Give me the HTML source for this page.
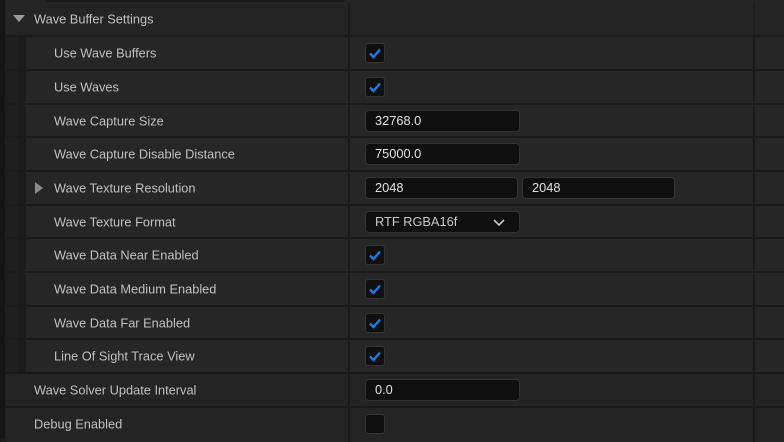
<!DOCTYPE html>
<html><head><style>
body{margin:0;width:784px;height:438px;background:#1e1e1e;overflow:hidden;font-family:"Liberation Sans",sans-serif;font-size:12.8px;color:#c0c0c0;position:relative}
.r{position:absolute;left:6px;width:778px;background:#242424;border-bottom:2px solid #1a1a1a;box-sizing:border-box}
.n{background:#1f1f1f}
.n .in{position:absolute;left:12px;top:0;bottom:0;width:8px;background:#1b1b1b}
.n .bg{position:absolute;left:20px;top:0;bottom:0;right:0;background:#262626}
.lbl{position:absolute;top:50%;transform:translateY(-50%);white-space:nowrap}
.d1{position:absolute;left:342px;top:0;bottom:0;width:2px;background:#1a1a1a}
.d2{position:absolute;left:747px;top:0;bottom:0;width:2px;background:#1a1a1a}
.cb{position:absolute;left:359px;top:50%;margin-top:-10px;width:20px;height:20px;background:#0f0f0f;border:1px solid #343434;border-radius:3px;box-sizing:border-box}
.cb svg{position:absolute;left:2px;top:2px}
.inp{position:absolute;left:359px;top:50%;margin-top:-11px;height:22px;background:#0f0f0f;border:1px solid #333;border-radius:4px;box-sizing:border-box;color:#e0e0e0;padding-left:9px;line-height:20px}
</style></head><body>
<div style="position:absolute;left:0;top:0;width:5px;height:438px;background:#151515"></div>
<div style="position:absolute;left:6px;top:0;width:778px;height:3px;background:#242424"></div>
<div style="position:absolute;left:45px;top:0;width:300px;height:2px;background:#1a1a1a"></div>

<div class="r" style="top:3px;height:34px"><div class="d1"></div><div class="d2" style="background:#1f1f1f"></div>
<svg style="position:absolute;left:7px;top:12px" width="12" height="8"><path d="M0 0H12L6 7Z" fill="#9a9a9a"/></svg>
<span class="lbl" style="left:28px">Wave Buffer Settings</span></div>

<div class="r n" style="top:37px;height:34px"><div class="in"></div><div class="bg"></div><div class="d1"></div><div class="d2"></div><span class="lbl" style="left:48px">Use Wave Buffers</span><div class="cb"><svg width="14" height="14"><path d="M2 7.5L5.5 11L12 3.5" stroke="#1f7ae0" stroke-width="2.4" fill="none"/></svg></div></div>
<div class="r n" style="top:71px;height:34px"><div class="in"></div><div class="bg"></div><div class="d1"></div><div class="d2"></div><span class="lbl" style="left:48px">Use Waves</span><div class="cb"><svg width="14" height="14"><path d="M2 7.5L5.5 11L12 3.5" stroke="#1f7ae0" stroke-width="2.4" fill="none"/></svg></div></div>
<div class="r n" style="top:105px;height:33px"><div class="in"></div><div class="bg"></div><div class="d1"></div><div class="d2"></div><span class="lbl" style="left:48px">Wave Capture Size</span><div class="inp" style="width:155px">32768.0</div></div>
<div class="r n" style="top:138px;height:34px"><div class="in"></div><div class="bg"></div><div class="d1"></div><div class="d2"></div><span class="lbl" style="left:48px">Wave Capture Disable Distance</span><div class="inp" style="width:155px">75000.0</div></div>
<div class="r n" style="top:172px;height:34px"><div class="in"></div><div class="bg"></div><div class="d1"></div><div class="d2"></div>
<svg style="position:absolute;left:29px;top:10px" width="8" height="12"><path d="M0 0V12L8 6Z" fill="#8a8a8a"/></svg>
<span class="lbl" style="left:48px">Wave Texture Resolution</span><div class="inp" style="width:153px">2048</div><div class="inp" style="left:516px;width:153px">2048</div></div>
<div class="r n" style="top:206px;height:33px"><div class="in"></div><div class="bg"></div><div class="d1"></div><div class="d2"></div><span class="lbl" style="left:48px">Wave Texture Format</span><div class="inp" style="width:155px;color:#c8c8c8">RTF RGBA16f<svg style="position:absolute;left:127px;top:7px" width="12" height="8"><path d="M1 1L6 6L11 1" stroke="#c8c8c8" stroke-width="1.6" fill="none"/></svg></div></div>
<div class="r n" style="top:239px;height:34px"><div class="in"></div><div class="bg"></div><div class="d1"></div><div class="d2"></div><span class="lbl" style="left:48px">Wave Data Near Enabled</span><div class="cb"><svg width="14" height="14"><path d="M2 7.5L5.5 11L12 3.5" stroke="#1f7ae0" stroke-width="2.4" fill="none"/></svg></div></div>
<div class="r n" style="top:273px;height:34px"><div class="in"></div><div class="bg"></div><div class="d1"></div><div class="d2"></div><span class="lbl" style="left:48px">Wave Data Medium Enabled</span><div class="cb"><svg width="14" height="14"><path d="M2 7.5L5.5 11L12 3.5" stroke="#1f7ae0" stroke-width="2.4" fill="none"/></svg></div></div>
<div class="r n" style="top:307px;height:33px"><div class="in"></div><div class="bg"></div><div class="d1"></div><div class="d2"></div><span class="lbl" style="left:48px">Wave Data Far Enabled</span><div class="cb"><svg width="14" height="14"><path d="M2 7.5L5.5 11L12 3.5" stroke="#1f7ae0" stroke-width="2.4" fill="none"/></svg></div></div>
<div class="r n" style="top:340px;height:34px"><div class="in"></div><div class="bg"></div><div class="d1"></div><div class="d2"></div><span class="lbl" style="left:48px">Line Of Sight Trace View</span><div class="cb"><svg width="14" height="14"><path d="M2 7.5L5.5 11L12 3.5" stroke="#1f7ae0" stroke-width="2.4" fill="none"/></svg></div></div>
<div class="r" style="top:374px;height:34px"><div class="d1"></div><div class="d2"></div><span class="lbl" style="left:28px">Wave Solver Update Interval</span><div class="inp" style="width:155px">0.0</div></div>
<div class="r" style="top:408px;height:34px;border:none"><div class="d1"></div><div class="d2"></div><span class="lbl" style="left:28px;top:16px">Debug Enabled</span><div class="cb" style="top:16px"></div></div>
</body></html>
